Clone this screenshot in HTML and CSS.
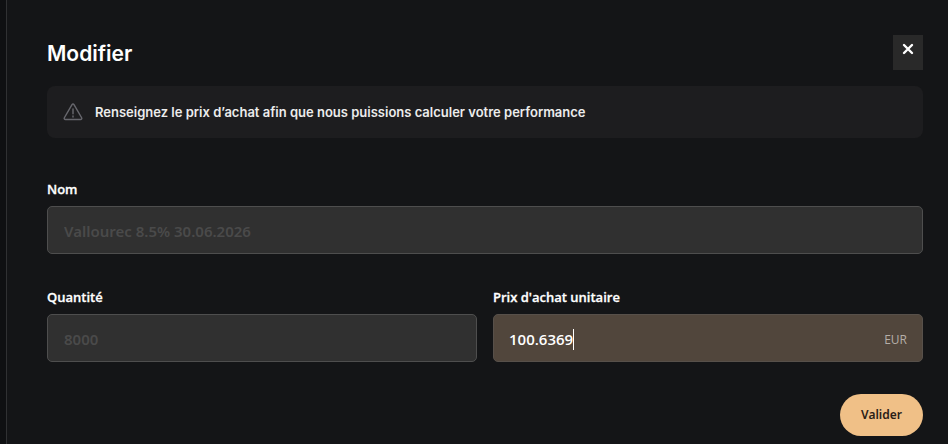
FILE: index.html
```html
<!DOCTYPE html>
<html lang="fr">
<head>
<meta charset="utf-8">
<meta name="viewport" content="width=device-width, initial-scale=1">
<title>Modifier</title>
<link rel="stylesheet" href="styles.css">
</head>
<body>
<main class="panel">
  <header class="panel-header">
    <h1>Modifier</h1>
    <button class="close" type="button" aria-label="Fermer">
      <svg width="12" height="12" viewBox="0 0 12 12" aria-hidden="true"><path d="M2 2l8 8M10 2l-8 8"/></svg>
    </button>
  </header>
  <div class="notice">
    <svg width="20" height="18" viewBox="0 0 22 20" aria-hidden="true"><path d="M9.9 1.8 1.4 16.4C.9 17.4 1.5 18.4 2.6 18.4H19.4C20.5 18.4 21.1 17.4 20.6 16.4L12.1 1.8C11.6 1 10.4 1 9.9 1.8ZM11 6.5V12M11 14.500V15.500"/></svg>
    <p>Renseignez le prix d’achat afin que nous puissions calculer votre performance</p>
  </div>
  <form class="form">
    <div class="field wide">
      <label for="nom">Nom</label>
      <div class="control"><input id="nom" type="text" value="Vallourec 8.5% 30.06.2026" disabled></div>
    </div>
    <div class="field">
      <label for="quantite">Quantité</label>
      <div class="control"><input id="quantite" type="text" value="8000" disabled></div>
    </div>
    <div class="field">
      <label for="prix">Prix d'achat unitaire</label>
      <div class="control active">
        <input id="prix" type="text" inputmode="decimal" value="100.6369">
        <span class="caret"></span>
        <span class="unit">EUR</span>
      </div>
    </div>
    <button class="submit" type="submit">Valider</button>
  </form>
</main>
</body>
</html>
```
FILE: styles.css
```css
* {
  box-sizing: border-box;
}

body {
  margin: 0;
  min-height: 100vh;
  padding-left: 6px;
  background: #0f1012;
  color: #fff;
  font-family: "Open Sans", "Noto Sans", sans-serif;
}

.panel {
  min-height: 100vh;
  padding: 35px 25px 8px 40px;
  border-left: 1px solid #303133;
  background: #141517;
}

.panel-header {
  display: flex;
  justify-content: space-between;
  align-items: flex-start;
  margin-bottom: 16px;
}

h1 {
  margin: 0;
  padding-top: 3px;
  font: 600 21px/32px Inter, sans-serif;
}

.close {
  width: 30px;
  height: 35px;
  padding: 0 0 8px;
  border: 0;
  background: #292929;
  line-height: 0;
}

.close path {
  fill: none;
  stroke: #fff;
  stroke-width: 2.4;
  stroke-linecap: round;
}

.notice {
  display: flex;
  align-items: center;
  gap: 12px;
  padding: 16px;
  margin-bottom: 40px;
  border-radius: 8px;
  background: #1d1d1f;
}

.notice path {
  fill: none;
  stroke: #67676d;
  stroke-width: 1.6;
  stroke-linecap: round;
  stroke-linejoin: round;
}

.notice p {
  margin: 0;
  color: #ececec;
  font: 600 13px/20px Inter, sans-serif;
}

.form {
  display: grid;
  grid-template-columns: 1fr 1fr;
  gap: 32px 16px;
}

.wide {
  grid-column: 1 / -1;
}

label {
  display: block;
  margin-bottom: 6px;
  color: #fff;
  font-size: 13px;
  font-weight: 600;
  line-height: 22px;
  -webkit-text-stroke: 0.3px #fff;
}

.control {
  display: flex;
  align-items: center;
  height: 48px;
  padding: 1px 16px 0;
  border: 1px solid #4e4e4e;
  border-radius: 5px;
  background: #303030;
}

.control input {
  flex: 1;
  min-width: 0;
  padding: 0;
  border: 0;
  outline: 0;
  background: transparent;
  color: #fff;
  font: 600 15px/24px "Open Sans", "Noto Sans", sans-serif;
}

.control input:disabled {
  color: #4a4a4a;
  font-family: "Noto Sans", sans-serif;
}

.control.active {
  padding: 2px 15px 0;
  border-color: #57504a;
  background: #51463c;
}

.active input {
  flex: none;
  field-sizing: content;
}

.caret {
  width: 1px;
  height: 21px;
  background: #fff;
}

.unit {
  margin-left: auto;
  color: #b5aea8;
  font-size: 12px;
}

.submit {
  grid-column: 1 / -1;
  justify-self: end;
  height: 42px;
  padding: 0 21px;
  border: 0;
  border-radius: 21px;
  background: #f0c087;
  color: #2b2117;
  font: 600 12px/20px "Noto Sans", sans-serif;
}
```
